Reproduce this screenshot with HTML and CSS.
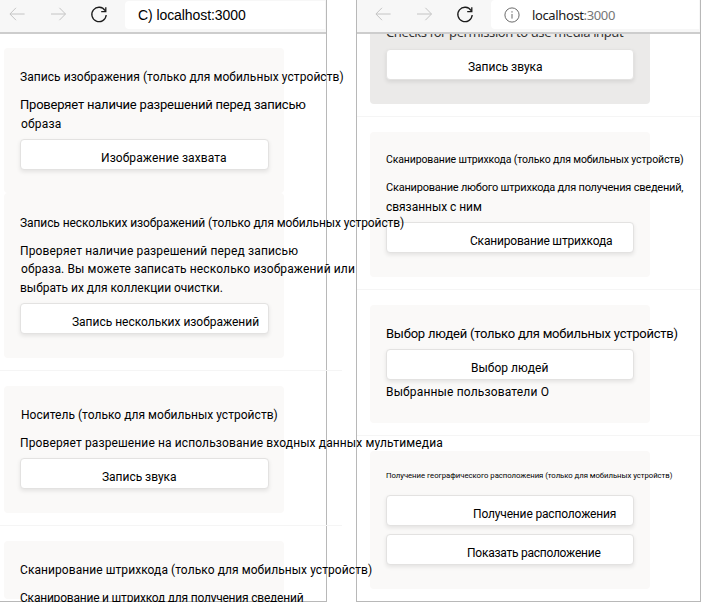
FILE: index.html
```html
<!DOCTYPE html>
<html lang="ru">
<head>
<meta charset="utf-8">
<title>localhost:3000</title>
<link rel="stylesheet" href="styles.css">
</head>
<body>
<svg class="defs" width="0" height="0">
  <symbol id="back" viewBox="0 0 16 14"><path d="M7 .8.9 7 7 13.2M1 7h14.6"/></symbol>
  <symbol id="forward" viewBox="0 0 16 14"><path d="M8.4.8 14.5 7l-6.1 6.2M14.4 7H0"/></symbol>
  <symbol id="reload" viewBox="0 0 18 18"><path d="M15.1 4.6A7.2 7.2 0 1 0 16.2 9M15.8 1.3v4.4h-4.6"/></symbol>
  <symbol id="info" viewBox="0 0 16 16"><circle cx="8" cy="8" r="7.1"/><path d="M8 7v4.6M8 4.2v1.4"/></symbol>
</svg>
<main class="screens">
  <section class="screen screen-left">
    <header class="bar">
      <svg class="ico nav"><use href="#back"/></svg>
      <svg class="ico nav fwd"><use href="#forward"/></svg>
      <svg class="ico reload"><use href="#reload"/></svg>
      <div class="address plain">C) localhost:3000</div>
    </header>
    <div class="content">
      <article class="card capture">
        <p class="t1">Запись изображения (только для мобильных устройств)</p>
        <p class="t2 gap10 big">Проверяет наличие разрешений перед записью</p>
        <p class="t3 gap1">образа</p>
        <button class="b1 gap6">Изображение захвата</button>
      </article>
      <article class="card multi">
        <p class="t4">Запись нескольких изображений (только для мобильных устройств)</p>
        <p class="t5 gap10">Проверяет наличие разрешений перед записью</p>
        <p class="t6">образа. Вы можете записать несколько изображений или</p>
        <p class="t7 gap1">выбрать их для коллекции очистки.</p>
        <button class="b2 gap6">Запись нескольких изображений</button>
      </article>
      <hr class="wide">
      <article class="card media">
        <p class="t8">Носитель (только для мобильных устройств)</p>
        <p class="t9 gap10">Проверяет разрешение на использование входных данных мультимедиа</p>
        <button class="b3 gap6">Запись звука</button>
      </article>
      <hr class="wide">
      <article class="card scan-cut">
        <p class="t10">Сканирование штрихкода (только для мобильных устройств)</p>
        <p class="t11 gap10">Сканирование и штрихкод для получения сведений</p>
      </article>
    </div>
  </section>
  <section class="screen screen-right">
    <header class="bar">
      <svg class="ico nav"><use href="#back"/></svg>
      <svg class="ico nav fwd"><use href="#forward"/></svg>
      <svg class="ico reload"><use href="#reload"/></svg>
      <div class="address"><svg class="ico info"><use href="#info"/></svg><span>localhost<i>:3000</i></span></div>
    </header>
    <div class="content scrolled">
      <article class="card audio">
        <p class="t12">Checks for permission to use media input</p>
        <button class="b4">Запись звука</button>
      </article>
      <hr>
      <article class="card scan">
        <p class="t13">Сканирование штрихкода (только для мобильных устройств)</p>
        <p class="t14 gap10">Сканирование любого штрихкода для получения сведений,</p>
        <p class="t15 gap1">связанных с ним</p>
        <button class="b5 gap6">Сканирование штрихкода</button>
      </article>
      <hr>
      <article class="card people">
        <p class="t16 big">Выбор людей (только для мобильных устройств)</p>
        <button class="b6 gap6">Выбор людей</button>
        <p class="t17 gap3">Выбранные пользователи О</p>
      </article>
      <hr>
      <article class="card geo">
        <p class="t18">Получение географического расположения (только для мобильных устройств)</p>
        <button class="b7">Получение расположения</button>
        <button class="b8">Показать расположение</button>
      </article>
    </div>
  </section>
</main>
</body>
</html>
```
FILE: styles.css
```css
* { box-sizing: border-box; }
body { margin: 0; width: 702px; height: 602px; overflow: hidden; background: #fff; color: #000; font: 12px/18px Roboto, sans-serif; }
.defs { display: block; height: 0; }
.screens { display: flex; height: 602px; }
.screen { height: 602px; border: solid #b8b8b8; flex: none; }
.screen-left { width: 327px; border-width: 0 1px 1px 0; position: relative; z-index: 1; }
.screen-right { width: 345px; margin-left: 29px; border-width: 0 1px 1px; }

.bar { display: flex; align-items: center; height: 34px; padding: 0 0 4px 9px; background: #f7f7f7; border-bottom: 2px solid #cdcdcd; }
.screen-right .bar { padding-left: 18px; }
.ico { display: block; flex: none; fill: none; stroke: #c4c4c4; stroke-width: 1; }
.nav { width: 16px; height: 14px; }
.fwd { margin-left: 26px; }
.reload { width: 18px; height: 18px; margin: 1px 0 0 23px; stroke: #1b1b1b; stroke-width: 1.3; }
.address { display: flex; align-items: center; flex: 1; align-self: flex-start; height: 28px; margin: 1px 1px 0 17px; padding-left: 13px; background: #fff; border-radius: 4px 0 0 4px; font: 13px/18px "Noto Sans", sans-serif; letter-spacing: -.37px; color: #1a1a1a; }
.screen-right .address { margin: 0 1px 0 17px; height: 29px; }
.address i { font-style: normal; color: #767676; }
.plain { font: 14px/18px "Liberation Sans", sans-serif; letter-spacing: -.08px; color: #000; }
.info { width: 16px; height: 16px; margin-right: 12px; stroke: #6b6b6b; }

.content { display: flex; flex-direction: column; height: 567px; padding-top: 14px; }
.scrolled { padding-top: 0; }
.card { flex: none; width: 280px; margin-left: 4px; padding: 20px 16px 0; border-radius: 4px; background: #faf9f8; }
.screen-right .card { margin-left: 13px; }
p { margin: 0; height: 18px; white-space: nowrap; }
.big { font-size: 13px; }
.gap1 { margin-top: 1px; }
.gap3 { margin-top: 3px; }
.gap6 { margin-top: 6px; }
.gap10 { margin-top: 10px; }
button { display: block; width: 249px; height: 31px; padding: 9px 0 2px; border: 1px solid #e3e2e1; border-radius: 4px; background: #fff; box-shadow: 0 2px 4px rgba(0, 0, 0, .09); color: #000; font: 12px/18px Roboto, sans-serif; text-align: left; white-space: nowrap; }
hr { flex: none; height: 1px; margin: 12px 0 15px; border: 0; background: #f5f5f5; }
.wide { width: 342px; }

.capture { height: 145px; }
.multi { height: 165px; padding-top: 21px; }
.media { height: 127px; }
.scan-cut { height: 58px; }
.audio { height: 70px; padding-top: 0; border-radius: 0 0 4px 4px; background: #ebeae9; overflow: hidden; }
.scan { height: 145px; padding-top: 19px; }
.people { height: 118px; }
.geo { height: 138px; padding-top: 16px; }

.t1 { letter-spacing: .06px; }
.t2 { letter-spacing: -.21px; }
.t3 { letter-spacing: .2px; padding-left: 1px; }
.t4 { letter-spacing: -.085px; }
.t5 { letter-spacing: .15px; }
.t6 { letter-spacing: .13px; padding-left: 1px; }
.t7 { letter-spacing: -.02px; }
.t8 { letter-spacing: .03px; padding-left: 1px; }
.t9 { letter-spacing: .12px; }
.t10 { letter-spacing: .07px; }
.t11 { letter-spacing: -.21px; }
.t12 { margin-top: -11px; font: 13px/18px "Noto Sans", sans-serif; letter-spacing: -.4px; color: #333; }
.t13 { font-size: 10.5px; letter-spacing: -.13px; }
.t14 { font-size: 11px; letter-spacing: -.22px; }
.t15 { letter-spacing: -.04px; }
.t16 { letter-spacing: -.237px; }
.t17 { letter-spacing: .16px; }
.t18 { font-size: 7.75px; letter-spacing: -.04px; }
.b1 { padding-left: 80px; letter-spacing: .08px; }
.b2 { padding-left: 51px; letter-spacing: -.02px; }
.b3 { padding-left: 81px; letter-spacing: -.03px; }
.screen-right button { width: 248px; }
.b4 { margin-top: 8px; padding: 8px 0 3px 81px; letter-spacing: -.03px; }
.b5 { padding-left: 83px; letter-spacing: -.19px; }
.b6 { padding-left: 84px; letter-spacing: .02px; }
.b7 { margin-top: 10px; padding-left: 86px; letter-spacing: -.16px; }
.b8 { margin-top: 8px; padding-left: 80px; letter-spacing: -.25px; }
```
